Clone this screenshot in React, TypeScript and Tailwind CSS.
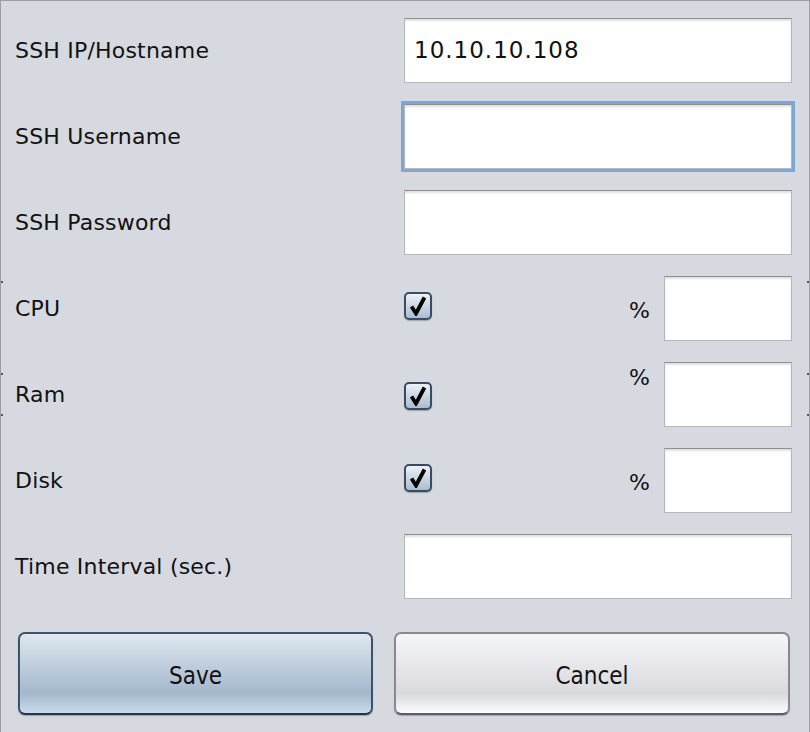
import React from 'react';

const fieldBase =
    'h-[65px] bg-white border border-[#b7b7b7] border-t-[#8d8d8d] shadow-[inset_0_2px_2px_rgba(0,0,0,0.12)]';

const Field: React.FC<{ value?: string; focused?: boolean; className?: string }> = ({ value, focused, className }) => (
    <div
        className={`${fieldBase} ${className ?? 'w-[388px]'} flex items-center pl-[9px] text-[23px] tracking-[1px] text-[#111] ${
            focused ? 'outline-[3px] outline-solid outline-[#7da8d6]' : ''
        }`}
    >
        {value}
    </div>
);

const Check: React.FC<{ className?: string }> = ({ className }) => (
    <div
        className={`w-[28px] h-[28px] rounded-[5px] border-2 border-[#3b4c62] bg-gradient-to-b from-[#edf2f7] to-[#a9bdd0] shadow-[0_1px_1px_rgba(0,0,0,0.25)] flex items-center justify-center ${className ?? ''}`}
    >
        <svg width="20" height="20" viewBox="0 0 20 20">
            <path d="M3.5 10.5 L8 17.5 L16.5 1.5" fill="none" stroke="#000" strokeWidth="3.8" strokeLinejoin="miter" />
        </svg>
    </div>
);

const Label: React.FC<{ children: React.ReactNode }> = ({ children }) => (
    <div className="w-[389px] shrink-0 text-[22px] tracking-[0.2px] text-[#111]">{children}</div>
);

const Tick: React.FC<{ top: string; side: string }> = ({ top, side }) => (
    <div className={`absolute ${top} ${side} w-[3px] h-[2px] bg-[#55585e]`} />
);

export default function App() {
    const meters = [
        { name: 'CPU', cb: '-mt-[4px]', pct: 'mt-[4px]' },
        { name: 'Ram', cb: 'mt-[4px]', pct: 'mb-[34px]' },
        { name: 'Disk', cb: '-mt-[4px]', pct: 'mt-[4px]' },
    ];

    return (
        <div className="relative w-[810px] h-[732px] bg-[#d6d9e0] border-l border-t border-r border-[#9b9ea4] font-['DejaVu_Sans',sans-serif] overflow-hidden">
            <Tick top="top-[280px]" side="-left-px" />
            <Tick top="top-[372px]" side="-left-px" />
            <Tick top="top-[413px]" side="-left-px" />
            <Tick top="top-[280px]" side="-right-px" />
            <Tick top="top-[372px]" side="-right-px" />
            <Tick top="top-[413px]" side="-right-px" />

            <div className="pt-[6px] pl-[14px]">
                <div className="flex items-center h-[86px]">
                    <Label>SSH IP/Hostname</Label>
                    <Field value="10.10.10.108" />
                </div>
                <div className="flex items-center h-[86px]">
                    <Label>SSH Username</Label>
                    <Field focused />
                </div>
                <div className="flex items-center h-[86px]">
                    <Label>SSH Password</Label>
                    <Field />
                </div>

                {meters.map((m) => (
                    <div key={m.name} className="flex items-center h-[86px]">
                        <Label>{m.name}</Label>
                        <div className="w-[388px] flex items-center">
                            <Check className={m.cb} />
                            <span className={`ml-auto mr-[14px] text-[22px] text-[#111] ${m.pct}`}>%</span>
                            <Field className="w-[128px]" />
                        </div>
                    </div>
                ))}

                <div className="flex items-center h-[86px]">
                    <Label>Time Interval (sec.)</Label>
                    <Field />
                </div>
            </div>

            <div className="flex gap-[21px] pl-[17px] mt-[23px]">
                <button className="w-[355px] h-[83px] pt-[5px] rounded-[7px] border-2 border-[#3e5268] border-b-[#24364b] bg-gradient-to-b from-[#dfe7ef] via-[#a4b8cc] via-75% to-[#c9dbec] shadow-[0_1px_1px_rgba(0,0,0,0.25)] text-[24px] text-[#111] font-['DejaVu_Sans_Condensed','DejaVu_Sans',sans-serif] [font-stretch:condensed]">
                    Save
                </button>
                <button className="w-[396px] h-[83px] pt-[5px] rounded-[7px] border-2 border-[#8a8a8c] border-b-[#5e5e60] bg-gradient-to-b from-[#f6f6f8] via-[#d9dade] via-75% to-[#fbfbfc] shadow-[0_1px_1px_rgba(0,0,0,0.25)] text-[24px] text-[#111] font-['DejaVu_Sans_Condensed','DejaVu_Sans',sans-serif] [font-stretch:condensed]">
                    Cancel
                </button>
            </div>
        </div>
    );
}
